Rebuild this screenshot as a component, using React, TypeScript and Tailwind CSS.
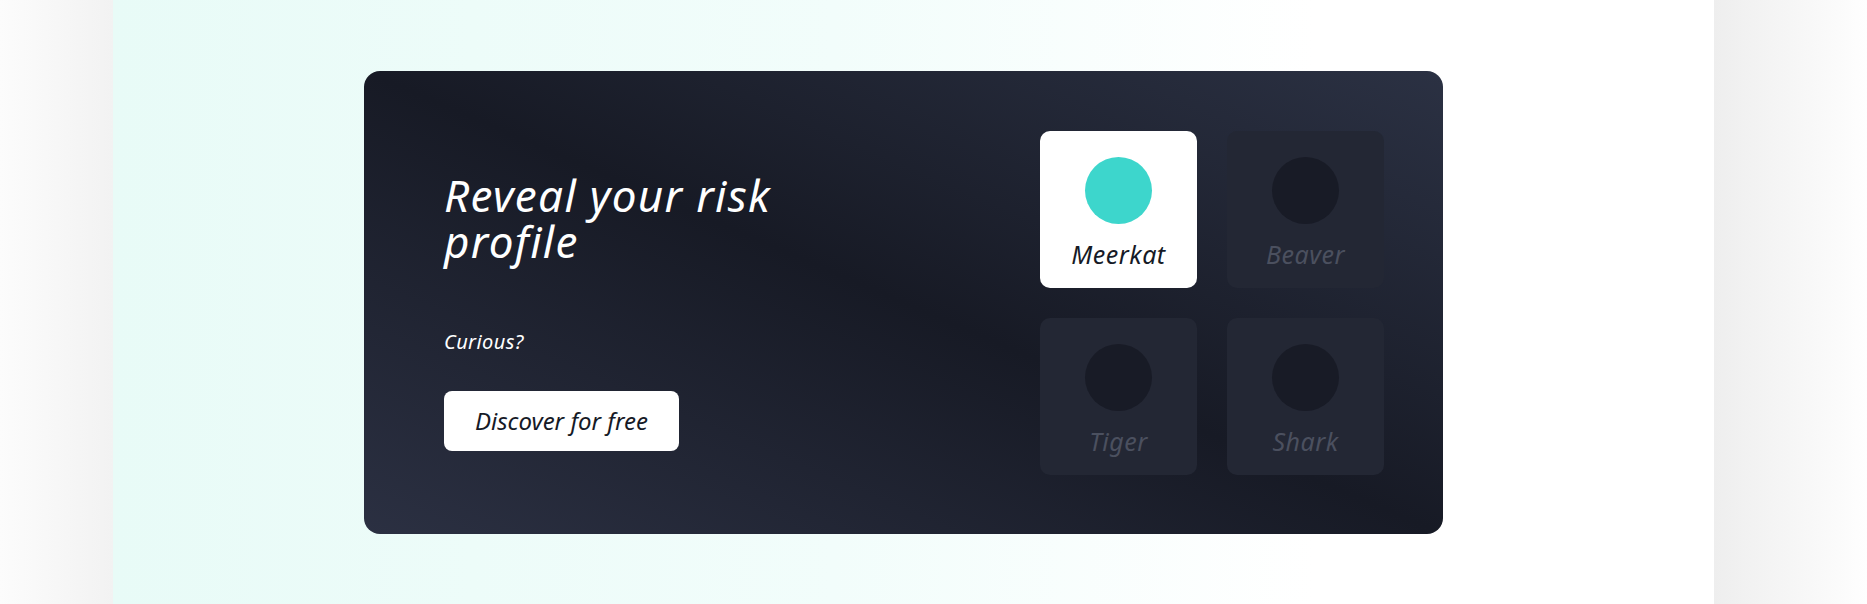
const profiles = [
  { name: "Meerkat", active: true },
  { name: "Beaver", active: false },
  { name: "Tiger", active: false },
  { name: "Shark", active: false },
];

const ProfileTile = ({ name, active }: { name: string; active: boolean }) => {
  return (
    <div
      className={
        active
          ? "flex h-[157px] w-[157px] flex-col items-center rounded-[10px] bg-white pt-[26px]"
          : "flex h-[157px] w-[157px] flex-col items-center rounded-[10px] bg-[#232734] pt-[26px]"
      }
    >
      <div
        className={
          active
            ? "h-[67px] w-[67px] rounded-full bg-[#3dd6cc]"
            : "h-[67px] w-[67px] rounded-full bg-[#181b26]"
        }
      />
      <p
        className={
          active
            ? "mt-[14px] text-[25px] leading-[32px] tracking-[0.02em] italic text-[#161a26]"
            : "mt-[14px] text-[25px] leading-[32px] tracking-[0.02em] italic text-[#4b505f]"
        }
      >
        {name}
      </p>
    </div>
  );
};

const App = () => {
  return (
    <div className="flex h-[604px] w-full font-['Noto_Sans',sans-serif]">
      <div className="h-full w-[113px] shrink-0 bg-[linear-gradient(to_right,#fcfcfc,#f2f2f2)]" />
      <div className="h-full w-[1601px] shrink-0 bg-[linear-gradient(to_right,#e8fbf7,#f2fdfb_45%,#ffffff_75%)] pl-[251px] pt-[71px]">
        <div className="flex h-[463px] w-[1079px] justify-between rounded-2xl bg-[linear-gradient(to_top_right,#2b3042,#171a25_50%,#2b3143)] py-[60px] pl-[80px] pr-[59px]">
          <div className="mt-[41px] flex flex-col items-start">
            <h2 className="w-[360px] text-[44px] leading-[46px] tracking-[0.03em] italic text-white">
              Reveal your risk profile
            </h2>
            <p className="mt-[64px] text-[20px] leading-[28px] tracking-[0.02em] italic text-white">
              Curious?
            </p>
            <button className="mt-[35px] h-[60px] w-[235px] rounded-lg bg-white text-[24px] italic text-[#161a26]">
              Discover for free
            </button>
          </div>
          <div className="grid grid-cols-2 gap-[30px] self-start">
            {profiles.map((profile) => (
              <ProfileTile
                key={profile.name}
                name={profile.name}
                active={profile.active}
              />
            ))}
          </div>
        </div>
      </div>
      <div className="h-full flex-1 bg-[linear-gradient(to_right,#eeeeee,#fefefe)]" />
    </div>
  );
};

export default App;
